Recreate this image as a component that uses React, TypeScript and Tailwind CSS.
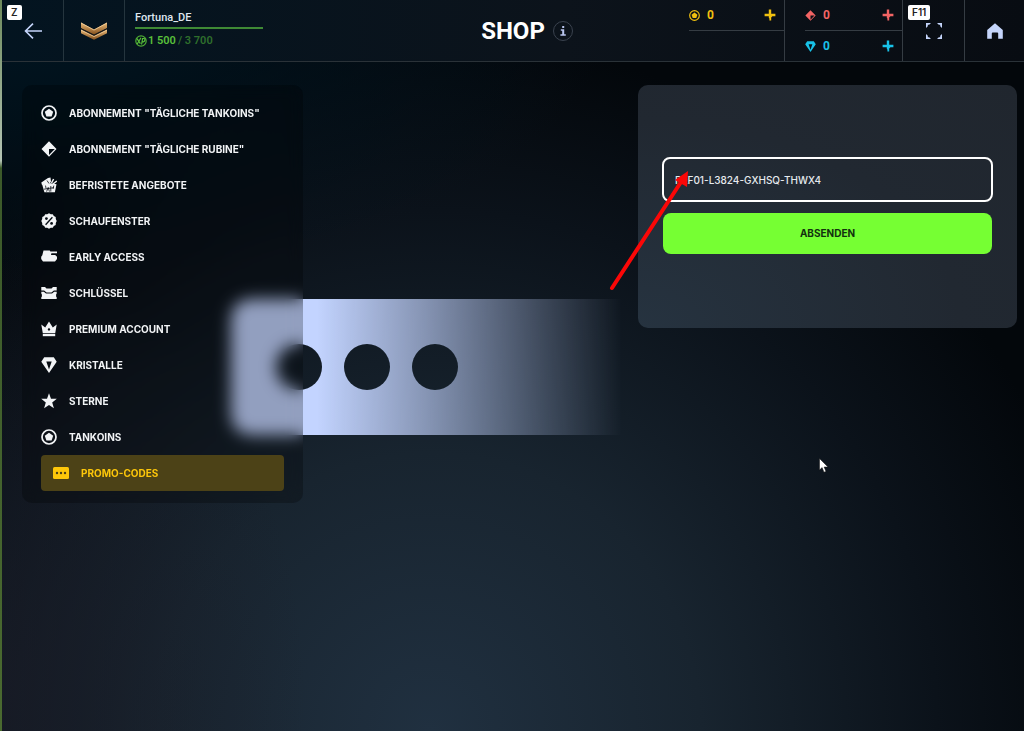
import React from 'react';

type IconProps = { className?: string };

const TankoinIcon = ({ className = 'size-4' }: IconProps) => (
  <svg viewBox="0 0 16 16" className={className} fill="none" aria-hidden="true">
    <circle cx="8" cy="8" r="7" stroke="currentColor" strokeWidth="1.7" />
    <path d="M8 3.800l4.200 3-1.600 4.800H5.400L3.800 6.800z" fill="currentColor" />
  </svg>
);

const RubyIcon = ({ className = 'size-4' }: IconProps) => (
  <svg viewBox="0 0 16 16" className={className} fill="currentColor" aria-hidden="true">
    <path fillRule="evenodd" d="M8 .3L15.500 8 8 15.700.5 8zM8 8v6l5.800-6z" />
  </svg>
);

const OffersIcon = ({ className = 'size-4' }: IconProps) => (
  <svg viewBox="0 0 16 16" className={className} aria-hidden="true">
    <path d="M.3 5.500L7 1l2.500-.6L10 4.500 8.500 7 1 8z" fill="currentColor" />
    <path d="M12.600 2L10.500 6M15.800 4L12 7" stroke="currentColor" strokeWidth="1.500" />
    <path d="M1.200 7.600L8.500 6l7 1.200-1.600 8H3.400z" fill="currentColor" />
    <path d="M6 3.500l2 3M4.500 8.600l.6 3M5.600 14.600l1.600-4.200 1.200 4.200M9.800 9v5.600M12.800 8.600l-.8 3.400M3 12.200l10-1.600" stroke="#070d14" strokeWidth=".8" fill="none" />
  </svg>
);

const PercentIcon = ({ className = 'size-4' }: IconProps) => (
  <svg viewBox="0 0 16 16" className={className} aria-hidden="true">
    <path
      d="M8 .3l1.800 1 2-.1 1 1.900 1.900 1 .1 2L15.700 8l-.9 1.900-.1 2-1.900 1-1 1.900-2-.1-1.800 1-1.800-1-2 .1-1-1.900-1.900-1-.1-2L.3 8l.9-1.900.1-2 1.900-1 1-1.900 2 .1z"
      fill="currentColor"
    />
    <path d="M11.400 4.200l-6.800 7.600" stroke="#070d14" strokeWidth="1.300" />
    <circle cx="5.400" cy="5.600" r="1.400" fill="#070d14" />
    <circle cx="10.600" cy="10.400" r="1.400" fill="#070d14" />
  </svg>
);

const TankIcon = ({ className = 'size-4' }: IconProps) => (
  <svg viewBox="0 0 16 16" className={className} fill="currentColor" aria-hidden="true">
    <path d="M2.500 1.500h6.200l.7 1H16v1.800h-5.600L10 5.900h4.200L16 7.700v2.200l-2 2.600H2L.2 9.900V7.700L1.300 6.200z" />
  </svg>
);

const KeyBoxIcon = ({ className = 'size-4' }: IconProps) => (
  <svg viewBox="0 0 16 16" className={className} fill="currentColor" aria-hidden="true">
    <path d="M.3 2H4l1.500 1.500h5L12 2h3.700v3.600h-2.800L10.400 7.400H5.600L3.100 5.600H.3z" />
    <path d="M.3 6.800h2.500L5 8.600h6l2.200-1.800h2.500v1.800l-.6.8v2l.6.8v1.800H.3v-1.800l.6-.8v-2l-.6-.8z" />
  </svg>
);

const CrownIcon = ({ className = 'size-4' }: IconProps) => (
  <svg viewBox="0 0 16 16" className={className} fill="currentColor" aria-hidden="true">
    <path fillRule="evenodd" d="M.3 3.600l3.900 2.800L8 .4l3.800 6 3.900-2.800-1.500 8.600H1.800zM8 6.800L6.600 8.400 8 10l1.400-1.600z" />
    <path d="M1.800 13h12.400v2.200H1.800z" />
  </svg>
);

const CrystalIcon = ({ className = 'size-4' }: IconProps) => (
  <svg viewBox="0 0 16 16" className={className} fill="currentColor" aria-hidden="true">
    <path fillRule="evenodd" d="M3.200.3h9.600l2.900 4.400L8 15.900.3 4.700zM5.300 4.600L8 12.600l2.700-8z" />
  </svg>
);

const StarIcon = ({ className = 'size-4' }: IconProps) => (
  <svg viewBox="0 0 16 16" className={className} fill="currentColor" aria-hidden="true">
    <path d="M8 .2l2 5.600h5.800l-4.600 3.600 1.700 5.900L8 11.900l-4.900 3.400 1.700-5.900L.2 5.800H6z" />
  </svg>
);

const PromoIcon = ({ className = 'size-4' }: IconProps) => (
  <svg viewBox="0 0 16 16" className={className} aria-hidden="true">
    <rect x="0" y="2" width="16" height="12" rx="1.500" fill="currentColor" />
    <circle cx="4" cy="8" r="1.200" fill="#4a3f18" />
    <circle cx="8" cy="8" r="1.200" fill="#4a3f18" />
    <circle cx="12" cy="8" r="1.200" fill="#4a3f18" />
  </svg>
);

const PlusIcon = () => (
  <svg viewBox="0 0 12 12" className="size-3" fill="currentColor" aria-hidden="true">
    <path d="M4.800.6h2.400v4.200h4.200v2.400H8.400l-1.200 1.200v3.200H5.400V9.600l-.6-.8V7.200H.6V4.800h4.200z" />
  </svg>
);

const RankIcon = () => (
  <svg viewBox="0 0 28 18" className="h-[18px] w-7" aria-hidden="true">
    <defs>
      <linearGradient id="rank" x1="0" y1="0" x2="0" y2="1">
        <stop offset="0" stopColor="#e8b978" />
        <stop offset="1" stopColor="#85501c" />
      </linearGradient>
    </defs>
    <path d="M1 .5l13 7 13-7v5.500l-13 6.500L1 6z" fill="url(#rank)" />
    <path d="M1 7.500l13 6.500 13-6.500v3.800L14 17.800 1 11.300z" fill="url(#rank)" />
    <path d="M1 7l13 6.500L27 7" stroke="#2b1a0c" strokeWidth=".8" fill="none" />
    <path d="M1 1l13 7 13-7M1 8l13 6.500L27 8" stroke="#f6d3a0" strokeWidth=".8" fill="none" />
  </svg>
);

const XpIcon = () => (
  <svg viewBox="0 0 12 12" className="size-3" aria-hidden="true">
    <circle cx="6" cy="6" r="5.200" fill="#04141c" stroke="#4fae35" strokeWidth="1.200" />
    <path d="M2 3.600l3.400 5M6 2.800L2.200 9M6.600 9.500l1-6h1.200q1.400.2 1.100 1.700T8.400 6.800H7.300" stroke="#59c03a" strokeWidth="1.200" fill="none" />
  </svg>
);

const MENU = [
  { label: 'Abonnement "Tägliche Tankoins"', Icon: TankoinIcon },
  { label: 'Abonnement "Tägliche Rubine"', Icon: RubyIcon },
  { label: 'Befristete Angebote', Icon: OffersIcon },
  { label: 'Schaufenster', Icon: PercentIcon },
  { label: 'Early Access', Icon: TankIcon },
  { label: 'Schlüssel', Icon: KeyBoxIcon },
  { label: 'Premium Account', Icon: CrownIcon },
  { label: 'Kristalle', Icon: CrystalIcon },
  { label: 'Sterne', Icon: StarIcon },
  { label: 'Tankoins', Icon: TankoinIcon },
  { label: 'Promo-Codes', Icon: PromoIcon, active: true },
];

interface BalanceProps {
  name: string;
  color: string;
  icon: React.ReactNode;
}

const Balance: React.FC<BalanceProps> = ({ name, color, icon }) => (
  <div className={`flex h-[30px] items-center gap-[7px] pr-2 ${color}`}>
    {icon}
    <span className="text-xs font-bold">0</span>
    <button type="button" aria-label={`${name} kaufen`} className="ml-auto">
      <PlusIcon />
    </button>
  </div>
);

const Header = () => (
  <header className="grid h-[62px] grid-cols-[1fr_auto_1fr] border-b border-[#2a3238] bg-[linear-gradient(90deg,#031420,#0c131b_55%,#080c12)]">
    <div className="flex">
      <button type="button" aria-label="Zurück" className="relative flex w-[62px] items-center justify-center border-r border-[#25353e]">
        <kbd className="absolute top-[5px] left-[5px] rounded-xs bg-white px-1 font-[Inter] text-[10px]/[15px] font-semibold text-[#222]">Z</kbd>
        <svg viewBox="0 0 18 16" className="h-4 w-[18px]" fill="none" stroke="#c5d5fb" strokeWidth="1.600" aria-hidden="true">
          <path d="M18 8H1.500M9 .6L1.500 8 9 15.400" />
        </svg>
      </button>
      <div className="flex w-[61px] items-center justify-center border-r border-[#25353e]">
        <RankIcon />
      </div>
      <div className="pt-2.5 pl-2.5">
        <div className="w-32 border-b-2 border-[#3f8a35] pb-0.5 text-[11px]/[15px] font-medium text-[#dfe6ee]">Fortuna_DE</div>
        <div className="mt-1 flex items-center text-[11px]/4 font-semibold text-[#2f6f2c]">
          <XpIcon />
          <span className="ml-px text-[#59c03a]">1 500</span>
          <span className="ml-0.5">/ 3 700</span>
        </div>
      </div>
    </div>
    <div className="flex items-center gap-2 pl-7">
      <h1 className="text-2xl font-bold text-white">SHOP</h1>
      <button type="button" aria-label="Info" className="flex size-5 items-center justify-center rounded-full border border-[#3a424e] text-[#b9c5ee]">
        <svg viewBox="0 0 8 10" className="h-2.5 w-2" fill="currentColor" aria-hidden="true">
          <path d="M3.200 0h2v2h-2zM1.800 3.300h3.400v4.900h1.600v1.500H1.400V8.200h1.800V4.700H1.800z" />
        </svg>
      </button>
    </div>
    <div className="flex justify-end">
      <div className="w-[95px]">
        <div className="border-b border-[#353c43]">
          <Balance name="Tankoins" color="text-[#f0c010]" icon={<TankoinIcon className="size-[11px]" />} />
        </div>
      </div>
      <div className="w-[119px] border-x border-[#353c43] pl-5">
        <div className="border-b border-[#353c43]">
          <Balance name="Rubine" color="text-[#f26464]" icon={<RubyIcon className="size-[11px]" />} />
        </div>
        <Balance name="Kristalle" color="text-[#18c2e8]" icon={<CrystalIcon className="size-[11px]" />} />
      </div>
      <button type="button" aria-label="Vollbild" className="relative flex w-[62px] items-center justify-center border-r border-[#353c43]">
        <kbd className="absolute top-[5px] left-[5px] rounded-xs bg-white px-1 font-[Inter] text-[10px]/[15px] font-semibold text-[#222]">F11</kbd>
        <svg viewBox="0 0 16 16" className="size-4" fill="#c5d5fb" aria-hidden="true">
          <path d="M0 0h5L3.200 1.800H1.800v1.400L0 5zM16 0v5l-1.800-1.800V1.800h-1.400L11 0zM16 16h-5l1.800-1.800h1.400v-1.400L16 11zM0 16v-5l1.800 1.800v1.400h1.400L5 16z" />
        </svg>
      </button>
      <a href="#home" aria-label="Startseite" className="flex w-[59px] items-center justify-center">
        <svg viewBox="0 0 16 16" className="size-4" fill="#c5d5fb" aria-hidden="true">
          <path d="M8 .3l7.800 6.600v8.800h-4.600v-5.200q0-1-1-1H5.800q-1 0-1 1v5.200H.2V6.900z" />
        </svg>
      </a>
    </div>
  </header>
);

// Large ticket illustration that fades out behind the menu
const TicketArt = () => (
  <svg viewBox="0 0 392 136" className="absolute top-[299px] left-[229px] h-[136px] w-[392px]" aria-hidden="true">
    <defs>
      <linearGradient id="fade" x1="0" x2="1">
        <stop offset="0.22" stopColor="#c3d4ff" />
        <stop offset="0.5" stopColor="#c3d4ff" stopOpacity="0.65" />
        <stop offset="0.8" stopColor="#c3d4ff" stopOpacity="0.25" />
        <stop offset="0.92" stopColor="#c3d4ff" stopOpacity="0.1" />
        <stop offset="1" stopColor="#c3d4ff" stopOpacity="0" />
      </linearGradient>
      <mask id="holes">
        <rect width="392" height="136" fill="white" />
        <circle cx="68" cy="68" r="23" fill="black" />
        <circle cx="136" cy="68" r="23" fill="black" />
        <circle cx="204" cy="68" r="23" fill="black" />
      </mask>
    </defs>
    <path d="M23 0h369v136H23q-23 0-23-23V23Q0 0 23 0z" fill="url(#fade)" mask="url(#holes)" />
  </svg>
);

const Sidebar = () => (
  <nav className="relative w-[281px] rounded-[10px] bg-black/25 px-[19px] pt-2.5 pb-3 backdrop-blur-sm">
    <ul>
      {MENU.map(({ label, Icon, active }) => (
        <li key={label}>
          <button
            type="button"
            className={`flex h-9 w-full items-center gap-3 font-[Inter] text-[10px] font-bold uppercase ${
              active ? 'rounded-sm bg-[#4c4217] px-3 text-[#fdc70a]' : 'text-[#f2f4f6]'
            }`}
          >
            <Icon className="size-4" />
            {label}
          </button>
        </li>
      ))}
    </ul>
  </nav>
);

const PromoForm = () => (
  <form
    className="relative ml-auto flex w-[379px] flex-col gap-[11px] rounded-[10px] bg-[radial-gradient(ellipse_at_0%_100%,#263340,#212831_60%,#20262e)] px-6 pt-[72px] pb-[74px]"
    onSubmit={(e) => e.preventDefault()}
  >
    <input
      aria-label="Promo-Code"
      defaultValue="REF01-L3824-GXHSQ-THWX4"
      className="h-[45px] w-full rounded-lg border-2 border-white bg-transparent px-[11px] font-[Inter] text-[10px] font-medium text-[#e6eaee] outline-none"
    />
    <button type="submit" className="mx-px h-[41px] rounded-lg bg-[#76ff33] font-[Inter] text-[10px] font-bold text-[#12300f]">
      ABSENDEN
    </button>
    {/* pointer to the code field */}
    <svg viewBox="0 0 84 122" className="pointer-events-none absolute top-[84px] -left-8 h-[122px] w-[84px]" aria-hidden="true">
      <path d="M6 119L75 13" stroke="#fb0707" strokeWidth="4" strokeLinecap="round" />
      <path d="M82 2L81 18 69 11z" fill="#fb0707" />
    </svg>
  </form>
);

export default function App() {
  return (
    <div className="flex min-h-screen bg-[#03070b] bg-[radial-gradient(ellipse_60%_40%_at_0%_0%,#001623,transparent),radial-gradient(ellipse_30%_60%_at_0%_95%,#1a1c27b0,transparent),radial-gradient(ellipse_66%_95%_at_42%_100%,#203040_0%,#18242f_40%,#0b121a_75%,transparent_100%)] font-[Roboto,sans-serif]">
      <div className="w-0.5 bg-[linear-gradient(#6d8a5c,#b4c4b4_22%,#3c5a2a_23%,#4a6a30)]" />
      <div className="relative flex-1">
        <Header />
        <TicketArt />
        <main className="flex items-start pt-[23px] pr-[7px] pl-5">
          <Sidebar />
          <PromoForm />
        </main>
        <svg viewBox="0 0 10 15" className="absolute top-[458px] left-[817px] h-[15px] w-2.5" aria-hidden="true">
          <path d="M.5.5v11.500l2.600-2.400 1.900 4.600 2-.8L5.100 9H9z" fill="#fff" stroke="#111" strokeWidth=".5" />
        </svg>
      </div>
    </div>
  );
}
